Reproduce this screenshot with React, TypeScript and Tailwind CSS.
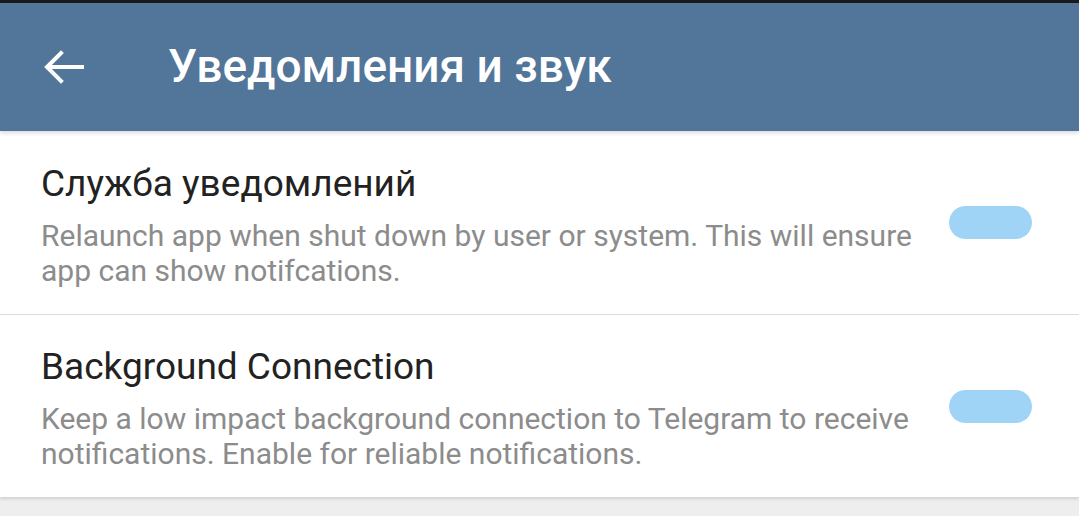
import React, { useState } from "react";

interface Setting {
    title: string;
    description: string;
}

const settings: Setting[] = [
    {
        title: "Служба уведомлений",
        description: "Relaunch app when shut down by user or system. This will ensure app can show notifcations."
    },
    {
        title: "Background Connection",
        description: "Keep a low impact background connection to Telegram to receive notifications. Enable for reliable notifications."
    }
];

function Toggle({ on, onClick }: { on: boolean; onClick: () => void }) {
    return (
        <button
            onClick={onClick}
            className={`w-[83px] h-[33px] rounded-full shrink-0 ${on ? "bg-[#9fd4f6]" : "bg-[#d6d6d6]"}`}
        />
    );
}

export default function App() {
    const [toggles, setToggles] = useState<boolean[]>([true, true]);

    return (
        <div className="w-[1079px] h-[516px] bg-[#eeeeee] overflow-hidden font-['Roboto',sans-serif]">
            <div className="h-[3px] bg-[#1a1a1a]" />
            <header className="h-[128px] bg-[#527699] flex items-center relative z-10 shadow-[0_2px_4px_rgba(0,0,0,0.15)]">
                <div className="w-[168px] pl-[44px] flex items-center">
                    <svg width="40" height="34" viewBox="0 0 40 34" fill="none" stroke="white" strokeWidth="4" strokeLinecap="square">
                        <path d="M38 17H4" />
                        <path d="M17 3L3 17l14 14" />
                    </svg>
                </div>
                <h1 className="text-white text-[46px] font-medium -mt-[2px]">Уведомления и звук</h1>
            </header>

            <div className="bg-white shadow-[0_2px_3px_rgba(0,0,0,0.12)]">
                {settings.map((s, i) => (
                    <div key={i} className={`flex items-center pl-[41px] pr-[47px] ${i === 0 ? "h-[184px] border-b border-[#dcdcdc]" : "h-[182px]"}`}>
                        <div className="flex-1 pr-[20px] pt-[4px]">
                            <div className="text-[37px] text-[#222222] leading-[44px]">{s.title}</div>
                            <div className="text-[30px] text-[#8c8c8c] leading-[35px] mt-[12px]">{s.description}</div>
                        </div>
                        <Toggle on={toggles[i]} onClick={() => setToggles(toggles.map((t, j) => (j === i ? !t : t)))} />
                    </div>
                ))}
            </div>
        </div>
    );
}
